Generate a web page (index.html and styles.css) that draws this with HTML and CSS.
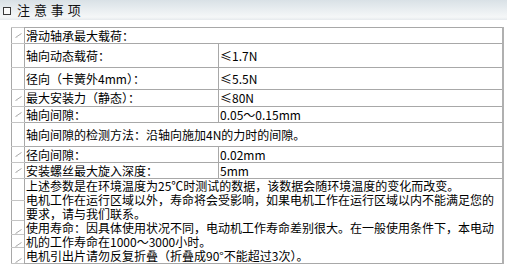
FILE: index.html
```html
<!DOCTYPE html>
<html lang="zh-CN">
<head>
<meta charset="utf-8">
<title>注意事项</title>
<link rel="stylesheet" href="styles.css">
</head>
<body>
<div class="hd"><span class="box"></span><span class="ttl">注 意 事 项</span></div>
<table class="spec">
<colgroup><col class="c-mk"><col class="c-lb"><col class="c-vl"></colgroup>
<tr class="h16"><td class="mk"><svg class="ar" width="7" height="5" viewBox="0 0 7 5"><path d="M0.5 4.5 L6.5 0.5" stroke="#a8a8a8" stroke-width="1" fill="none"/><path d="M1 4 L2.5 4" stroke="#c8c8c8" stroke-width="1"/></svg></td><td colspan="2">滑动轴承最大载荷：</td></tr>
<tr class="h24"><td class="mk"></td><td>轴向动态载荷：</td><td>≤1.7N</td></tr>
<tr class="h22"><td class="mk"></td><td>径向（卡簧外4mm）：</td><td>≤5.5N</td></tr>
<tr class="h17"><td class="mk"><svg class="ar" width="7" height="5" viewBox="0 0 7 5"><path d="M0.5 4.5 L6.5 0.5" stroke="#a8a8a8" stroke-width="1" fill="none"/><path d="M1 4 L2.5 4" stroke="#c8c8c8" stroke-width="1"/></svg></td><td>最大安装力（静态）：</td><td>≤80N</td></tr>
<tr class="h16"><td class="mk"><svg class="ar" width="7" height="5" viewBox="0 0 7 5"><path d="M0.5 4.5 L6.5 0.5" stroke="#a8a8a8" stroke-width="1" fill="none"/><path d="M1 4 L2.5 4" stroke="#c8c8c8" stroke-width="1"/></svg></td><td>轴向间隙：</td><td>0.05～0.15mm</td></tr>
<tr class="h24"><td class="mk"></td><td colspan="2">轴向间隙的检测方法：沿轴向施加4N的力时的间隙。</td></tr>
<tr class="h16"><td class="mk"><svg class="ar" width="7" height="5" viewBox="0 0 7 5"><path d="M0.5 4.5 L6.5 0.5" stroke="#a8a8a8" stroke-width="1" fill="none"/><path d="M1 4 L2.5 4" stroke="#c8c8c8" stroke-width="1"/></svg></td><td>径向间隙：</td><td>0.02mm</td></tr>
<tr class="h16"><td class="mk"><svg class="ar" width="7" height="5" viewBox="0 0 7 5"><path d="M0.5 4.5 L6.5 0.5" stroke="#a8a8a8" stroke-width="1" fill="none"/><path d="M1 4 L2.5 4" stroke="#c8c8c8" stroke-width="1"/></svg></td><td>安装螺丝最大旋入深度：</td><td>5mm</td></tr>
<tr class="h22"><td class="mk"></td><td colspan="2" rowspan="5" class="notes"><span class="ln">上述参数是在环境温度为25℃时测试的数据，该数据会随环境温度的变化而改变。</span><span class="ln">电机工作在运行区域以外，寿命将会受影响，如果电机工作在运行区域以内不能满足您的</span><span class="ln">要求，请与我们联系。</span><span class="ln">使用寿命：因具体使用状况不同，电动机工作寿命差别很大。在一般使用条件下，本电动</span><span class="ln">机的工作寿命在1000～3000小时。</span><span class="ln">电机引出片请勿反复折叠（折叠成90°不能超过3次）。</span></td></tr>
<tr class="h20"><td class="mk"></td></tr>
<tr class="h14"><td class="mk bot"><svg class="ar" width="7" height="5" viewBox="0 0 7 5"><path d="M0.5 4.5 L6.5 0.5" stroke="#a8a8a8" stroke-width="1" fill="none"/><path d="M1 4 L2.5 4" stroke="#c8c8c8" stroke-width="1"/></svg></td></tr>
<tr class="h13"><td class="mk bot"><svg class="ar" width="7" height="5" viewBox="0 0 7 5"><path d="M0.5 4.5 L6.5 0.5" stroke="#a8a8a8" stroke-width="1" fill="none"/><path d="M1 4 L2.5 4" stroke="#c8c8c8" stroke-width="1"/></svg></td></tr>
<tr class="h16"><td class="mk bot"><svg class="ar" width="7" height="5" viewBox="0 0 7 5"><path d="M0.5 4.5 L6.5 0.5" stroke="#a8a8a8" stroke-width="1" fill="none"/><path d="M1 4 L2.5 4" stroke="#c8c8c8" stroke-width="1"/></svg></td></tr>
</table>
</body>
</html>
```
FILE: styles.css
```css
html, body {
  margin: 0;
  padding: 0;
  background: #fff;
}
body {
  font-family: "Noto Sans CJK SC", "Liberation Sans", sans-serif;
  font-size: 12px;
  color: #000;
}
.hd {
  height: 20px;
  display: flex;
  align-items: center;
  background: linear-gradient(#d9e1e6 0%, #e8edf0 45%, #f5f7f8 85%, #e6eaed 100%);
}
.box {
  width: 6px;
  height: 6px;
  border: 1px solid #3a3a3a;
  background: #fbfbfb;
  margin: 1px 6px 0 3px;
}
.ttl {
  font-size: 13px;
  word-spacing: 1px;
  line-height: 14px;
  color: #111;
}
.spec {
  margin: 7px 0 0 11px;
  width: 491px;
  table-layout: fixed;
  border-collapse: collapse;
  border-right: 2px solid #b0b0b0;
}
.c-mk { width: 13px; }
.c-lb { width: 194px; }
.c-vl { width: 284px; }
.spec td {
  border: 1px solid #a8a8a8;
  padding: 0 1px;
  line-height: 14px;
  white-space: nowrap;
  vertical-align: middle;
  overflow: hidden;
}
.spec td.mk {
  padding: 0 0 0 3px;
  vertical-align: middle;
  border-top-color: #c4c4c4;
  border-bottom-color: #c4c4c4;
}
.spec td.mk.bot { vertical-align: bottom; }
.ar { display: block; }
.spec td.notes {
  vertical-align: top;
  padding-top: 0;
}
.ln {
  display: block;
  height: 14px;
  line-height: 14px;
}
.h13 { height: 13px; }
.h14 { height: 14px; }
.h15 { height: 15px; }
.h16 { height: 16px; }
.h17 { height: 17px; }
.h20 { height: 20px; }
.h22 { height: 22px; }
.h23 { height: 23px; }
.h24 { height: 24px; }
.h25 { height: 25px; }
```
